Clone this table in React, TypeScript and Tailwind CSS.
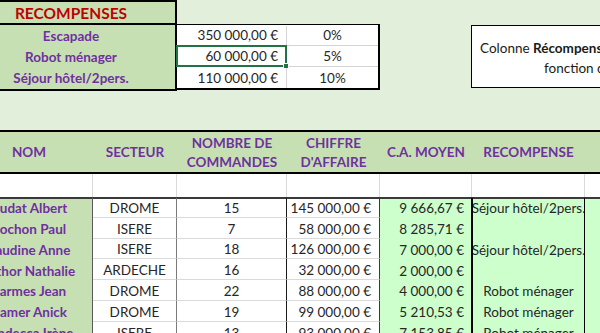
const COLS = [128, 84, 110, 93, 92, 113, 60];

type Row = {
  nom: string;
  secteur: string;
  nb: string;
  ca: string;
  moyen: string;
  rec: string;
};

const rows: Row[] = [
  { nom: 'Dudat Albert', secteur: 'DROME', nb: '15', ca: '145 000,00 €', moyen: '9 666,67 €', rec: 'Séjour hôtel/2pers.' },
  { nom: 'Cochon Paul', secteur: 'ISERE', nb: '7', ca: '58 000,00 €', moyen: '8 285,71 €', rec: '' },
  { nom: 'Baudine Anne', secteur: 'ISERE', nb: '18', ca: '126 000,00 €', moyen: '7 000,00 €', rec: 'Séjour hôtel/2pers.' },
  { nom: 'Arthor Nathalie', secteur: 'ARDECHE', nb: '16', ca: '32 000,00 €', moyen: '2 000,00 €', rec: '' },
  { nom: 'Carmes Jean', secteur: 'DROME', nb: '22', ca: '88 000,00 €', moyen: '4 000,00 €', rec: 'Robot ménager' },
  { nom: 'Damer Anick', secteur: 'DROME', nb: '19', ca: '99 000,00 €', moyen: '5 210,53 €', rec: 'Robot ménager' },
  { nom: 'Landecca Irène', secteur: 'ISERE', nb: '13', ca: '93 000,00 €', moyen: '7 153,85 €', rec: 'Robot ménager' },
];

const rewards = [
  { label: 'Escapade', seuil: '350 000,00 €', taux: '0%' },
  { label: 'Robot ménager', seuil: '60 000,00 €', taux: '5%' },
  { label: 'Séjour hôtel/2pers.', seuil: '110 000,00 €', taux: '10%' },
];

function RewardsTable() {
  return (
    <div className="flex h-[88px]">
      <div className="flex w-[212px] flex-col">
        <div className="flex h-[25px] items-center justify-center border-2 border-black bg-[#c6e0b4] pt-[3px] text-[15.5px] font-bold text-[#c00000]">
          RECOMPENSES
        </div>
        <div className="flex flex-1 flex-col border-x-2 border-b-2 border-black bg-[#c6e0b4] pb-px">
          {rewards.map((r) => (
            <div key={r.label} className="flex h-[21px] items-center justify-center pt-[2px] font-bold text-[#7030a0]">
              {r.label}
            </div>
          ))}
        </div>
      </div>
      <div className="flex w-[203px] flex-col pt-[24px]">
        <div className="flex flex-1 flex-col border-t border-r-2 border-b-2 border-black bg-white">
          {rewards.map((r, i) => (
            <div key={r.label} className={`flex h-[21px] pt-px ${i < 2 ? 'border-b border-[#d4d4d4]' : ''}`}>
              <div className="relative flex w-[110px] items-center justify-end border-r border-[#d4d4d4] pr-2">
                {r.seuil}
                {i === 1 && (
                  <div className="absolute -top-[2px] -bottom-px -left-px -right-px border-2 border-[#217346]">
                    <div className="absolute -right-[4px] -bottom-[4px] h-[6px] w-[6px] border border-white bg-[#217346]" />
                  </div>
                )}
              </div>
              <div className="flex flex-1 items-center justify-center">{r.taux}</div>
            </div>
          ))}
        </div>
      </div>
    </div>
  );
}

function Cell({
  w,
  className = '',
  children,
}: {
  w: number;
  className?: string;
  children?: React.ReactNode;
}) {
  return (
    <div className={`flex shrink-0 items-center overflow-hidden whitespace-nowrap ${className}`} style={{ width: w }}>
      {children}
    </div>
  );
}

function SalesTable() {
  return (
    <div>
      <div className="flex h-[44px] border-y-2 border-black bg-[#c6e0b4] pt-px font-bold leading-[19px] text-[#7030a0]">
        <Cell w={COLS[0]} className="justify-center">NOM</Cell>
        <Cell w={COLS[1]} className="justify-center">SECTEUR</Cell>
        <Cell w={COLS[2]} className="justify-center text-center">
          NOMBRE DE<br />COMMANDES
        </Cell>
        <Cell w={COLS[3]} className="justify-center text-center">
          CHIFFRE<br />D'AFFAIRE
        </Cell>
        <Cell w={COLS[4]} className="justify-center">C.A. MOYEN</Cell>
        <Cell w={COLS[5]} className="justify-center">RECOMPENSE</Cell>
        <Cell w={COLS[6]} />
      </div>
      <div className="flex h-[23px] bg-white">
        {COLS.map((w, i) => (
          <Cell key={i} w={w} className="border-r border-[#dadada]" />
        ))}
      </div>
      {rows.map((r, i) => {
        const top = i === 0 ? 'border-t-2 border-t-[#3a3a3a]' : 'pt-[2px]';
        return (
          <div key={r.nom} className="flex h-[20.8px] text-[#262626]">
            <Cell w={COLS[0]} className={`justify-center border-r border-r-[#5a5a5a] bg-[#c6e0b4] font-bold text-[#7030a0] ${top}`}>
              {r.nom}
            </Cell>
            <Cell w={COLS[1]} className={`justify-center border-r border-b border-r-[#7a7a7a] border-b-[#dadada] bg-white ${top}`}>
              {r.secteur}
            </Cell>
            <Cell w={COLS[2]} className={`justify-center border-r border-b border-r-[#1a1a1a] border-b-[#dadada] bg-white ${top}`}>
              {r.nb}
            </Cell>
            <Cell w={COLS[3]} className={`justify-end border-r border-b border-r-[#3a3a3a] border-b-[#dadada] bg-white pr-2 ${top}`}>
              {r.ca}
            </Cell>
            <Cell w={COLS[4]} className={`justify-end border-r border-r-black bg-[#ccffcc] pr-[7px] ${top}`}>
              {r.moyen}
            </Cell>
            <Cell w={COLS[5]} className={`justify-center border-x border-x-black bg-[#ccffcc] ${top}`}>
              {r.rec}
            </Cell>
            <Cell w={COLS[6]} className={`bg-[#ccffcc] ${top}`} />
          </div>
        );
      })}
    </div>
  );
}

export default function App() {
  return (
    <div
      className="relative h-[333px] w-[600px] overflow-hidden bg-[#e2efda] text-[13.5px] text-[#262626]"
      style={{ fontFamily: 'Lato, "Open Sans", sans-serif' }}
    >
      <div className="ml-[-35px] w-[700px]">
        <RewardsTable />
        <div className="h-[42px]" />
        <SalesTable />
      </div>

      <div className="absolute top-[25px] left-[471px] h-[63px] w-[300px] border-[1.5px] border-black bg-white pt-[12px] leading-[20px] text-[#1a1a1a]">
        <div className="pl-[8px] whitespace-nowrap">
          Colonne <b>Récompense</b> : attribuer le lot en
        </div>
        <div className="pl-[72px] whitespace-nowrap">fonction du C.A. moyen</div>
      </div>
    </div>
  );
}
